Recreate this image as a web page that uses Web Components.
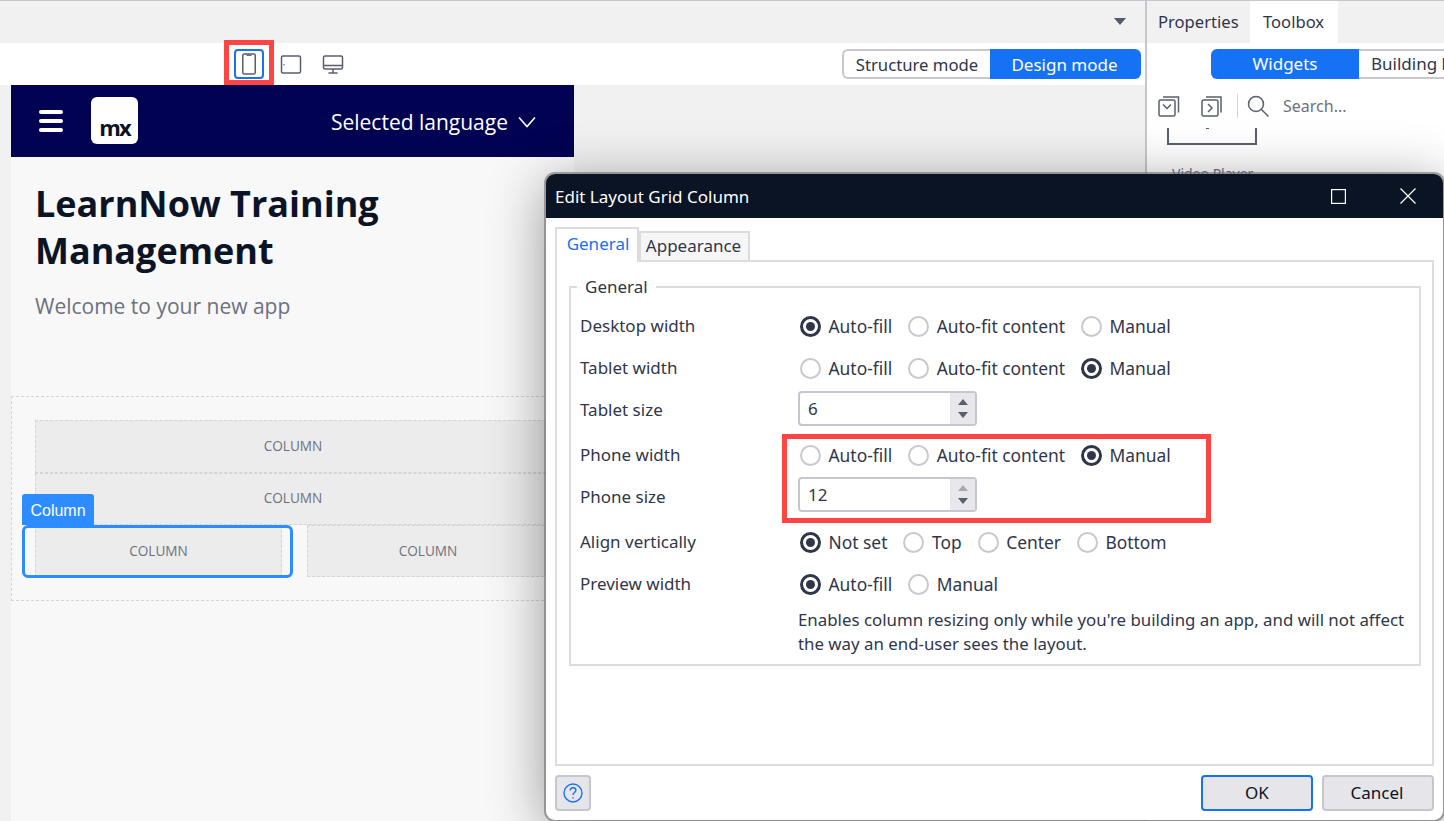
<!DOCTYPE html>
<html lang="en">
<head>
<meta charset="utf-8">
<title>Edit Layout Grid Column</title>
<style>
    html, body { margin: 0; height: 821px; overflow: hidden; background: #f1f1f1; }
    body { font-family: "Noto Sans", "Open Sans", sans-serif; color: #30364a; }
</style>
</head>
<body>
<studio-app>
    <page-toolbar slot="toolbar"></page-toolbar>
    <page-preview slot="canvas">
        <layout-row><layout-column style="height:53px">COLUMN</layout-column></layout-row>
        <layout-row><layout-column style="line-height:48px">COLUMN</layout-column></layout-row>
        <layout-row>
            <layout-column selected style="flex:none;width:247px">COLUMN</layout-column>
            <layout-column style="margin-right:2px">COLUMN</layout-column>
        </layout-row>
    </page-preview>
    <toolbox-panel slot="side"></toolbox-panel>
    <grid-dialog slot="dialog"></grid-dialog>
</studio-app>

<script>
class Base extends HTMLElement {
    constructor() {
        super();
        this.shadow = this.attachShadow({ mode: 'open' });
    }

    connectedCallback() {
        this.shadow.innerHTML = this.render();
    }
}

class StudioApp extends Base {
    render() {
        return `
            <style>
                :host { display: block; position: relative; width: 1444px; height: 821px; overflow: hidden; }
                .shell { display: grid; grid-template-columns: 1145px 2px 1fr; height: 821px; border-top: 1px solid #c6c6ce; box-sizing: border-box; }
                .left { display: flex; flex-direction: column; min-width: 0; }
                .tabs { height: 42px; position: relative; flex: none; }
                .tri { position: absolute; left: 1114px; top: 17px; width: 0; height: 0; border-left: 6px solid transparent; border-right: 6px solid transparent; border-top: 7px solid #55596a; }
                .sep { background: #c6c6ce; }
                .dialog { position: absolute; left: 546px; top: 174px; }
            </style>
            <div class="shell">
                <div class="left">
                    <div class="tabs"><span class="tri"></span></div>
                    <slot name="toolbar"></slot>
                    <slot name="canvas"></slot>
                </div>
                <div class="sep"></div>
                <slot name="side"></slot>
            </div>
            <div class="dialog"><slot name="dialog"></slot></div>
        `;
    }
}

class PageToolbar extends Base {
    render() {
        return `
            <style>
                :host { display: flex; position: relative; align-items: center; height: 42px; flex: none; background: #fff; padding-right: 4px; padding-left: 234px; }
                .device { width: 30px; height: 30px; display: flex; align-items: center; justify-content: center; box-sizing: border-box; margin-right: 12px; border-radius: 4px; }
                .device.on { border: 2px solid #1672f5; }
                svg { display: block; fill: none; stroke: #5a5f6e; stroke-width: 1.5; }
                .red { position: absolute; left: 224px; top: -3px; width: 50px; height: 45px; box-sizing: border-box; border: 5px solid #ff4444; }
                mode-toggle { margin-left: auto; }
            </style>
            <div class="device on"><svg width="16" height="22" viewBox="0 0 16 22"><rect x="1.75" y="1" width="12.5" height="20" rx="1.5"/><path d="M5.5 2.2h5" stroke-width="1.4"/></svg></div>
            <div class="device"><svg width="22" height="19" viewBox="0 0 22 19"><rect x="1.5" y="1" width="19" height="17" rx="1.5"/><path d="M4 9.2v1" stroke-width="1.6"/></svg></div>
            <div class="device"><svg width="22" height="19" viewBox="0 0 22 19"><rect x="1.5" y="1" width="19" height="13" rx="1.5"/><path d="M1.5 10.5h19M11 14v4M6.5 18h9"/></svg></div>
            <mode-toggle style="width:299px" first="Structure mode" second="Design mode"></mode-toggle>
            <div class="red"></div>
        `;
    }
}

class ModeToggle extends Base {
    render() {
        return `
            <style>
                :host { display: flex; height: 30px; font-size: 16.7px; line-height: 28px; }
                div { box-sizing: border-box; text-align: center; white-space: nowrap; }
                .a { width: 148px; border: 2px solid #c6c6ce; border-right: 0; border-radius: 6px 0 0 6px; background: #fff; color: #30364a; }
                .b { flex: 1; background: #1672f5; color: #fff; border-radius: 0 6px 6px 0; line-height: 32px; font-size: 17px; padding-right: 2px; }
            </style>
            <div class="a">${this.getAttribute('first')}</div>
            <div class="b">${this.getAttribute('second')}</div>
        `;
    }
}

class WidgetToggle extends Base {
    render() {
        return `
            <style>
                :host { display: flex; height: 30px; font-size: 17px; white-space: nowrap; }
                .a { width: 148px; background: #1672f5; color: #fff; border-radius: 6px 0 0 6px; text-align: center; line-height: 30px; flex: none; }
                .b { width: 180px; flex: none; box-sizing: border-box; border: 2px solid #c6c6ce; border-left: 0; padding-left: 12px; line-height: 26px; color: #30364a; }
            </style>
            <div class="a">Widgets</div>
            <div class="b">Building blocks</div>
        `;
    }
}

class PagePreview extends Base {
    render() {
        return `
            <style>
                :host { display: block; flex: 1; padding-left: 11px; min-height: 0; }
                .page { width: 563px; height: 736px; background: #f8f8f8; font-family: "Open Sans", sans-serif; }
                header { height: 72px; background: #020252; display: flex; align-items: center; color: #fff; }
                .burger { margin-left: 28px; width: 24px; display: flex; flex-direction: column; gap: 5px; margin-bottom: 1px; }
                .burger i { display: block; height: 4px; border-radius: 2px; background: #fff; }
                .logo { margin: 0 0 2px 28px; width: 47px; height: 47px; background: #fff; border-radius: 6px; display: flex; align-items: flex-end; justify-content: center; box-sizing: border-box; padding-bottom: 4px; color: #0a1424; font-weight: 700; font-size: 22px; line-height: 26px; letter-spacing: -2px; }
                .lang { margin: 2px 38px 0 auto; display: flex; align-items: center; gap: 10px; font-size: 21px; }
                svg { display: block; fill: none; stroke: #fff; stroke-width: 1.6; }
                .intro { padding: 23px 24px 0; height: 215px; box-sizing: border-box; }
                h1 { margin: 0; font-size: 36px; line-height: 47px; font-weight: 700; color: #0a1424; }
                p { margin: 17px 0 0; font-size: 21px; line-height: 30px; color: #6c717e; }
                .grid { margin-top: 24px; height: 205px; box-sizing: border-box; border: 1px dashed #d4d4d8; border-right: 0; padding: 23px 23px 0; }
            </style>
            <div class="page">
                <header>
                    <div class="burger"><i></i><i></i><i></i></div>
                    <div class="logo">mx</div>
                    <div class="lang">Selected language
                        <svg width="18" height="12" viewBox="0 0 18 12"><path d="M1 1.5l8 9 8-9"/></svg>
                    </div>
                </header>
                <div class="intro">
                    <h1>LearnNow Training Management</h1>
                    <p>Welcome to your new app</p>
                </div>
                <div class="grid"><slot></slot></div>
            </div>
        `;
    }
}

class LayoutRow extends Base {
    render() {
        return `
            <style>
                :host { display: flex; gap: 25px; width: 516px; }
            </style>
            <slot></slot>
        `;
    }
}

class LayoutColumn extends Base {
    render() {
        const selected = this.hasAttribute('selected');
        return `
            <style>
                :host { display: block; flex: 1; position: relative; height: 52px; box-sizing: border-box; background: #ececec; border: 1px dashed #d4d4d8; text-align: center; font-family: "Open Sans", sans-serif; font-size: 13.6px; line-height: 50px; color: #6c717e; }
                .outline { position: absolute; left: -14px; right: -12px; top: -1px; bottom: -2px; border: 3px solid #2d8cff; border-radius: 6px; }
                .tag { position: absolute; left: -14px; top: -32px; width: 72px; height: 31px; background: #2d8cff; color: #fff; border-radius: 3px 3px 0 0; font-family: "Liberation Sans", sans-serif; font-size: 16px; line-height: 33px; }
            </style>
            <slot></slot>
            ${selected ? '<div class="outline"></div><div class="tag">Column</div>' : ''}
        `;
    }
}

class ToolboxPanel extends Base {
    render() {
        return `
            <style>
                :host { display: block; background: #fff; overflow: hidden; position: relative; }
                .tabs { display: flex; height: 42px; background: #f1f1f1; font-size: 16.6px; line-height: 42px; }
                .tab { width: 103px; box-sizing: border-box; padding-left: 11px; }
                .tab.on { background: #fff; padding-left: 13px; width: 88px; }
                .switch { padding: 6px 0 0 64px; }
                .search { display: flex; align-items: center; height: 26px; margin-top: 14px; padding-left: 11px; }
                .search svg { display: block; fill: none; stroke: #5a5f6e; stroke-width: 1.5; flex: none; }
                .search svg + svg { margin-left: 21px; }
                .bar { width: 1px; height: 24px; background: #d4d4d8; margin: 0 9px 0 15px; }
                .search span { margin-left: 14px; font-size: 16px; color: #6c717e; }
                .clip { margin: 9px 0 0 20px; width: 90px; height: 17px; box-sizing: border-box; border: 2px solid #5a5f6e; border-top: 0; position: relative; }
                .clip::before { content: ""; position: absolute; left: 37px; top: 0; width: 3px; height: 1px; background: #5a5f6e; }
                .video { margin: 19px 0 0 25px; font-size: 14px; color: #6c717e; }
            </style>
            <div class="tabs">
                <div class="tab">Properties</div>
                <div class="tab on">Toolbox</div>
            </div>
            <div class="switch"><widget-toggle></widget-toggle></div>
            <div class="search">
                <svg width="22" height="22" viewBox="0 0 22 22"><rect x="1" y="5" width="16" height="16" rx="1.5"/><path d="M5 2h15.5v15.5M5 9.5l4 4 4-4"/></svg>
                <svg width="21" height="22" viewBox="0 0 21 22"><rect x="1" y="5" width="16" height="16" rx="1.5"/><path d="M5 2h15v15.5M7 9l4 4-4 4"/></svg>
                <div class="bar"></div>
                <svg width="22" height="22" viewBox="0 0 22 22"><circle cx="9" cy="9" r="7.5"/><path d="M14.5 14.5l7 7"/></svg>
                <span>Search...</span>
            </div>
            <div class="clip"></div>
            <div class="video">Video Player</div>
        `;
    }
}

class UiRadio extends Base {
    render() {
        const on = this.hasAttribute('checked');
        return `
            <style>
                :host { display: inline-flex; align-items: center; gap: 7.5px; font-size: 17.4px; margin-top: 2px; }
                i { display: block; width: 21px; height: 21px; box-sizing: border-box; border-radius: 50%; border: 2px solid #c8c8d0; background: #fff; position: relative; flex: none; margin-top: 1px; }
                i.on { border: 3px solid #30364a; }
                i.on::after { content: ""; position: absolute; left: 3px; top: 3px; width: 9px; height: 9px; border-radius: 50%; background: #30364a; }
            </style>
            <i class="${on ? 'on' : ''}"></i><slot></slot>
        `;
    }
}

class SpinInput extends Base {
    render() {
        const up = this.hasAttribute('at-max') ? '#a6a9b3' : '#5a5f6e';
        return `
            <style>
                :host { display: flex; width: 179px; height: 35px; margin-left: -2px; box-sizing: border-box; border: 2px solid #c6c6ce; border-radius: 4px; background: #fff; }
                .val { flex: 1; padding-left: 8px; line-height: 31px; }
                .spin { width: 25px; background: #e8e8ec; display: flex; flex-direction: column; align-items: center; justify-content: center; gap: 7px; }
                .spin i { display: block; width: 0; height: 0; border-left: 5px solid transparent; border-right: 5px solid transparent; }
                .u { border-bottom: 6px solid ${up}; }
                .d { border-top: 6px solid #5a5f6e; }
            </style>
            <div class="val"><slot></slot></div>
            <div class="spin"><i class="u"></i><i class="d"></i></div>
        `;
    }
}

class FormRow extends Base {
    render() {
        return `
            <style>
                :host { display: grid; grid-template-columns: 220px 1fr; grid-template-rows: 34px; align-items: center; height: 34px; margin-top: 8px; }
                .c { display: flex; align-items: center; gap: 16px; }
            </style>
            <div><slot name="label"></slot></div>
            <div class="c"><slot></slot></div>
        `;
    }
}

class GridDialog extends Base {
    render() {
        return `
            <style>
                :host { display: flex; flex-direction: column; position: relative; width: 897px; height: 646px; box-sizing: border-box; background: #fff; border-radius: 9px; overflow: visible; font-size: 17px; box-shadow: 0 0 0 2px rgba(110,110,110,.6), 0 10px 56px rgba(0,0,0,.42); color: #30364a; }
                .title { height: 44px; flex: none; background: #0a1424; color: #fff; border-radius: 9px 9px 0 0; display: flex; align-items: center; padding-left: 9px; font-size: 17px; }
                .title svg { display: block; fill: none; stroke: #fff; stroke-width: 1.2; }
                .title svg:first-of-type { margin-left: auto; margin-right: 1px; }
                .title svg:last-of-type { margin: 0 27px 0 53px; }
                .tabs { display: flex; align-items: flex-end; margin: 9px 0 0 9px; height: 35px; position: relative; z-index: 1; margin-bottom: -2px; }
                .tab { box-sizing: border-box; border: 2px solid #dcdcdc; }
                .tab.on { width: 84px; height: 35px; border-bottom: 0; background: #fff; color: #1672f5; text-align: center; line-height: 29px; padding-left: 2px; }
                .tab.off { width: 111px; height: 31px; background: #f6f6f6; text-align: center; line-height: 25px; padding-right: 2px; }
                .panel { flex: none; margin: 0 9px; height: 506px; box-sizing: border-box; border: 2px solid #dcdcdc; padding: 13px 11px 0 12px; }
                fieldset { margin: 0; padding: 0 0 0 9px; height: 391px; box-sizing: border-box; border: 2px solid #dcdcdc; min-inline-size: 0; position: relative; }
                legend { margin-left: -3px; padding: 0 8px; line-height: 24px; }
                .rows { margin-top: 9px; }
                .wide { margin-top: 11px; }
                .up1 { margin-bottom: 1px; }
                .up3 { margin-bottom: 3px; }
                .note { margin: 8px 0 0 218px; width: 620px; font-size: 16.85px; line-height: 24px; }
                .foot { flex: 1; display: flex; align-items: center; padding: 0 9px; gap: 9px; }
                .btn { box-sizing: border-box; width: 112px; height: 36px; background: #e6e6ea; border: 2px solid #c6c6ce; border-radius: 4px; text-align: center; line-height: 32px; color: #0a1424; }
                .btn.ok { border-color: #1672f5; margin-left: auto; }
                .btn.no { padding-right: 2px; }
                .help { width: 36px; display: flex; align-items: center; justify-content: center; }
                .help svg { display: block; fill: none; stroke: #1672f5; stroke-width: 1.4; }
                .red { position: absolute; left: 236px; top: 260px; width: 429px; height: 89px; box-sizing: border-box; border: 5px solid #ff4444; pointer-events: none; }
                span[slot="label"] { white-space: nowrap; }
            </style>
            <div class="title">Edit Layout Grid Column
                <svg width="15" height="15" viewBox="0 0 15 15"><rect x=".6" y=".6" width="13.8" height="13.8"/></svg>
                <svg width="16" height="16" viewBox="0 0 16 16"><path d="M.5.5l15 15M15.5.5l-15 15"/></svg>
            </div>
            <div class="tabs">
                <div class="tab on">General</div>
                <div class="tab off">Appearance</div>
            </div>
            <div class="panel">
                <fieldset>
                    <legend>General</legend>
                    <div class="rows">
                        <form-row><span slot="label">Desktop width</span>
                            <ui-radio checked>Auto-fill</ui-radio><ui-radio>Auto-fit content</ui-radio><ui-radio>Manual</ui-radio></form-row>
                        <form-row><span slot="label">Tablet width</span>
                            <ui-radio>Auto-fill</ui-radio><ui-radio>Auto-fit content</ui-radio><ui-radio checked>Manual</ui-radio></form-row>
                        <form-row><span slot="label">Tablet size</span><spin-input class="up1">6</spin-input></form-row>
                        <form-row class="wide"><span slot="label">Phone width</span>
                            <ui-radio>Auto-fill</ui-radio><ui-radio>Auto-fit content</ui-radio><ui-radio checked>Manual</ui-radio></form-row>
                        <form-row><span slot="label">Phone size</span><spin-input class="up3" at-max>12</spin-input></form-row>
                        <form-row class="wide"><span slot="label">Align vertically</span>
                            <ui-radio checked>Not set</ui-radio><ui-radio>Top</ui-radio><ui-radio>Center</ui-radio><ui-radio>Bottom</ui-radio></form-row>
                        <form-row><span slot="label">Preview width</span>
                            <ui-radio checked>Auto-fill</ui-radio><ui-radio>Manual</ui-radio></form-row>
                    </div>
                    <div class="note">Enables column resizing only while you're building an app, and will not affect the way an end-user sees the layout.</div>
                </fieldset>
            </div>
            <div class="foot">
                <div class="btn help"><svg width="20" height="20" viewBox="0 0 20 20"><circle cx="10" cy="10" r="9"/><path d="M7.2 7.6c0-1.7 1.3-2.8 2.9-2.8s2.8 1 2.8 2.5c0 2.2-2.9 2.3-2.9 4.7"/><path d="M10 14.2v1.4"/></svg></div>
                <div class="btn ok">OK</div>
                <div class="btn no">Cancel</div>
            </div>
            <div class="red"></div>
        `;
    }
}

customElements.define('studio-app', StudioApp);
customElements.define('page-toolbar', PageToolbar);
customElements.define('mode-toggle', ModeToggle);
customElements.define('widget-toggle', WidgetToggle);
customElements.define('page-preview', PagePreview);
customElements.define('layout-row', LayoutRow);
customElements.define('layout-column', LayoutColumn);
customElements.define('toolbox-panel', ToolboxPanel);
customElements.define('ui-radio', UiRadio);
customElements.define('spin-input', SpinInput);
customElements.define('form-row', FormRow);
customElements.define('grid-dialog', GridDialog);
</script>
</body>
</html>
